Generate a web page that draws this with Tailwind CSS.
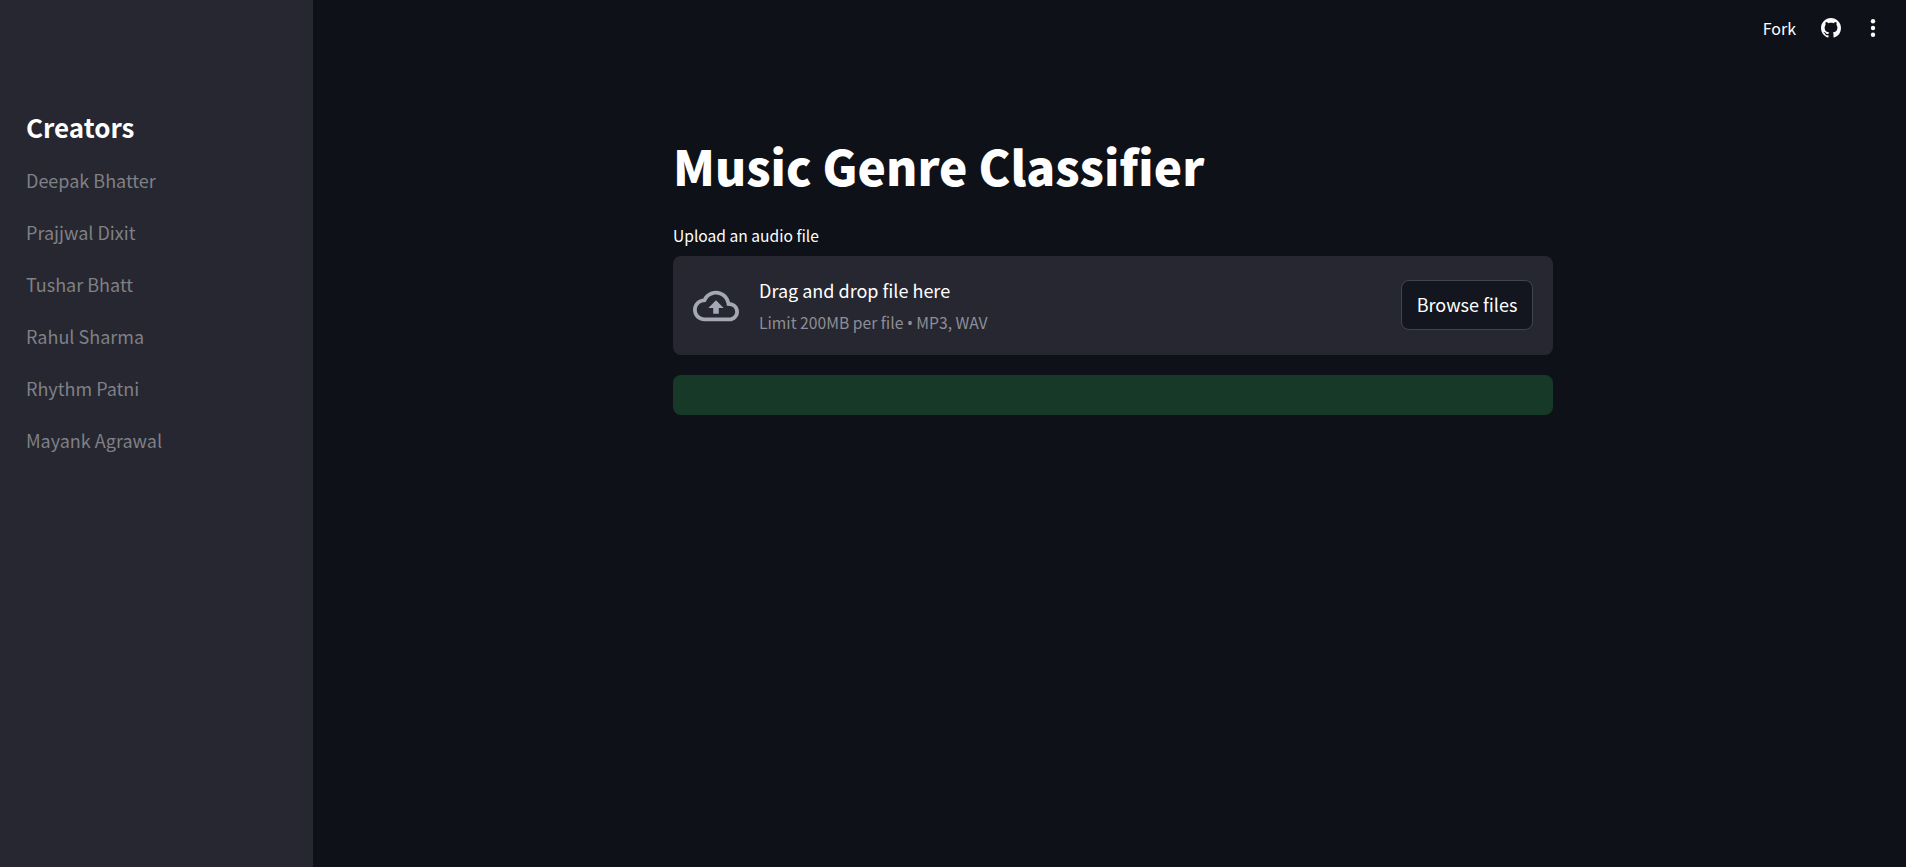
<!DOCTYPE html>
<html lang="en">
  <head>
    <meta charset="UTF-8" />
    <meta name="viewport" content="width=device-width, initial-scale=1.0" />
    <title>Music Genre Classifier</title>
    <script src="https://cdn.jsdelivr.net/npm/@tailwindcss/browser@4"></script>
  </head>
  <body class="bg-[#0e1117] font-['Noto_Sans_CJK_SC','Noto_Sans',sans-serif] text-[#fafafa]">
    <div class="flex h-[867px] w-[1906px] overflow-hidden">
      <!-- Sidebar -->
      <aside class="w-[313px] shrink-0 bg-[#262730] pl-[26px] pt-[109px]">
        <h2 class="text-[26px] leading-[36px] font-semibold text-white">Creators</h2>
        <ul class="mt-[21px] flex flex-col gap-[24px] text-[18px] leading-[28px] text-[#808085]">
          <li>Deepak Bhatter</li>
          <li>Prajjwal Dixit</li>
          <li>Tushar Bhatt</li>
          <li>Rahul Sharma</li>
          <li>Rhythm Patni</li>
          <li>Mayank Agrawal</li>
        </ul>
      </aside>

      <main class="flex min-w-0 flex-1 flex-col">
        <!-- Top bar -->
        <div class="flex h-[56px] items-center justify-end pr-[30px]">
          <span class="text-[16px] leading-[24px] text-white">Fork</span>
          <svg class="ml-[25px] h-[20px] w-[20px]" viewBox="0 0 16 16" fill="#fafafa"><path d="M8 0C3.58 0 0 3.58 0 8c0 3.54 2.29 6.53 5.47 7.59.4.07.55-.17.55-.38 0-.19-.01-.82-.01-1.49-2.01.37-2.53-.49-2.69-.94-.09-.23-.48-.94-.82-1.13-.28-.15-.68-.52-.01-.53.63-.01 1.08.58 1.23.82.72 1.21 1.87.87 2.33.66.07-.52.28-.87.51-1.07-1.78-.2-3.64-.89-3.64-3.95 0-.87.31-1.59.82-2.15-.08-.2-.36-1.02.08-2.12 0 0 .67-.21 2.2.82.64-.18 1.32-.27 2-.27s1.36.09 2 .27c1.53-1.04 2.2-.82 2.2-.82.44 1.1.16 1.92.08 2.12.51.56.82 1.27.82 2.15 0 3.07-1.87 3.75-3.65 3.95.29.25.54.73.54 1.48 0 1.07-.01 1.93-.01 2.2 0 .21.15.46.55.38A8.01 8.01 0 0 0 16 8c0-4.42-3.58-8-8-8z"/></svg>
          <svg class="ml-[29px] h-[20px] w-[6px]" viewBox="0 0 6 20" fill="#fafafa"><circle cx="3" cy="3.3" r="2.2"/><circle cx="3" cy="10" r="2.2"/><circle cx="3" cy="16.7" r="2.2"/></svg>
        </div>

        <!-- Content -->
        <div class="ml-[360px] w-[880px] pt-[79px]">
          <h1 class="text-[47.8px] leading-[62px] font-extrabold text-white">Music Genre Classifier</h1>
          <label class="mt-[27px] block text-[15.6px] leading-[22px] text-white">Upload an audio file</label>

          <!-- Upload box -->
          <div class="mt-[10px] flex h-[99px] items-center rounded-[8px] bg-[#262730] pr-[20px] pl-[20px]">
            <svg class="h-[46px] w-[46px] shrink-0" viewBox="0 0 24 24" fill="#a3a8b4"><path d="M19.35 10.04C18.67 6.59 15.64 4 12 4 9.11 4 6.6 5.64 5.35 8.04 2.34 8.36 0 10.91 0 14c0 3.31 2.69 6 6 6h13c2.76 0 5-2.24 5-5 0-2.64-2.05-4.78-4.65-4.96zM19 18H6c-2.21 0-4-1.79-4-4 0-2.05 1.53-3.76 3.56-3.97l1.07-.11.5-.95C8.08 7.14 9.94 6 12 6c2.62 0 4.88 1.86 5.39 4.43l.3 1.5 1.53.11c1.56.1 2.78 1.41 2.78 2.96 0 1.65-1.35 3-3 3zM8 13h2.55v3h2.9v-3H16l-4-4z"/></svg>
            <div class="ml-[20px] flex-1">
              <div class="text-[18px] leading-[28px] text-white">Drag and drop file here</div>
              <div class="mt-[7px] text-[15.7px] leading-[24px] text-[#8d8e96]">Limit 200MB per file <span class="font-['Noto_Sans',sans-serif]">•</span> MP3, WAV</div>
            </div>
            <button class="mb-[2px] h-[50px] w-[132px] rounded-[8px] border border-[#41444f] bg-[#13161f] text-[18px] text-white">Browse files</button>
          </div>

          <!-- Empty success alert -->
          <div class="mt-[20px] h-[40px] rounded-[8px] bg-[#173928]"></div>
        </div>
      </main>
    </div>
  </body>
</html>
